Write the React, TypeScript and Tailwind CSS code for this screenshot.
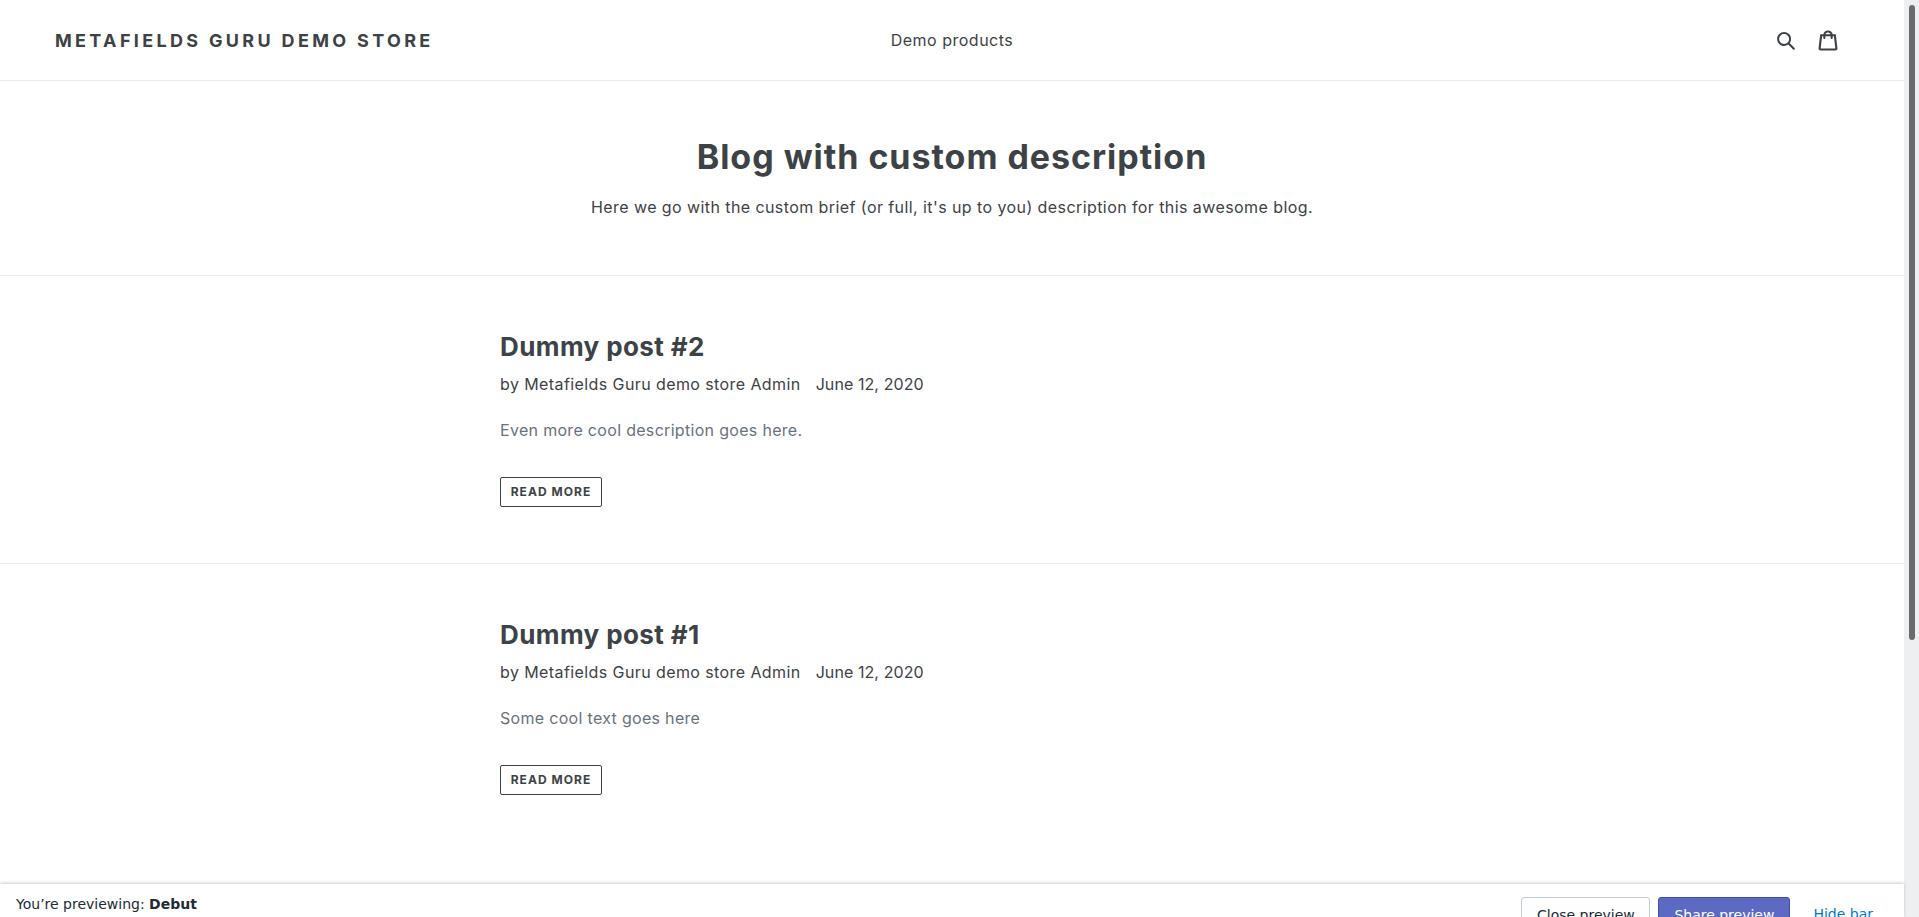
const posts = [
  { title: "Dummy post #2", excerpt: "Even more cool description goes here." },
  { title: "Dummy post #1", excerpt: "Some cool text goes here" },
];

function SearchIcon() {
  return (
    <svg viewBox="0 0 37 40" className="w-[20px] h-[20px] fill-[#3d4246]">
      <path d="M35.6 36l-9.8-9.8c4.1-5.4 3.6-13.2-1.3-18.1-5.4-5.4-14.2-5.4-19.7 0-5.4 5.4-5.4 14.2 0 19.7 2.6 2.6 6.1 4.1 9.8 4.1 3 0 5.9-1 8.3-2.8l9.8 9.8c.4.4.9.6 1.4.6s1-.2 1.4-.6c.9-.9.9-2.1.1-2.9zm-20.9-8.2c-2.6 0-5.1-1-7-2.9-3.9-3.9-3.9-10.1 0-14C9.6 9 12.2 8 14.7 8s5.1 1 7 2.9c3.9 3.9 3.9 10.1 0 14-1.9 1.9-4.4 2.9-7 2.9z" />
    </svg>
  );
}

function CartIcon() {
  return (
    <svg viewBox="0 0 37 40" className="w-[20px] h-[21px] fill-[#3d4246]">
      <path d="M36.5 34.8L33.3 8h-5.9C26.7 3.9 23 .8 18.5.8S10.3 3.9 9.6 8H3.7L.5 34.8c-.2 1.5.4 2.4.9 3 .5.5 1.4 1.2 3.1 1.2h28.1c1.3 0 2.4-.4 3.1-1.3.7-.7 1-1.8.8-2.9zm-18-30c2.2 0 4.1 1.4 4.7 3.2h-9.5c.7-1.9 2.6-3.2 4.8-3.2zM4.5 35l2.8-23h2.2v3c0 1.1.9 2 2 2s2-.9 2-2v-3h10v3c0 1.1.9 2 2 2s2-.9 2-2v-3h2.2l2.8 23h-28z" />
    </svg>
  );
}

function Post({ title, excerpt, last }: { title: string; excerpt: string; last?: boolean }) {
  return (
    <article className={last ? "h-[288px] pt-[55px] pl-[500px]" : "border-b border-[#e8e9eb] h-[288px] pt-[55px] pl-[500px]"}>
      <h2 className="text-[26px] leading-[31px] font-bold tracking-[0.4px]">{title}</h2>
      <div className="mt-[10px] leading-[24px] flex gap-[15px] tracking-[0.41px]">
        <span>by Metafields Guru demo store Admin</span>
        <span className="tracking-[0.08px]">June 12, 2020</span>
      </div>
      <p className="mt-[22px] leading-[24px] text-[#69727b] tracking-[0.31px]">{excerpt}</p>
      <button className="mt-[35px] flex items-center justify-center w-[102px] h-[30px] border border-[#3d4246] rounded-[2px] text-[12px] font-bold tracking-[1.05px] uppercase">
        Read more
      </button>
    </article>
  );
}

export default function App() {
  return (
    <div className="relative flex h-screen overflow-hidden bg-white text-[#3d4246] font-['Inter','Liberation_Sans',sans-serif]">
      <div className="flex-1 min-w-0">
        <header className="h-[81px] border-b border-[#e8e9eb] grid grid-cols-[1fr_auto_1fr] items-center px-[55px]">
          <a className="text-[18px] font-bold tracking-[3.33px] uppercase whitespace-nowrap">
            Metafields Guru demo store
          </a>
          <nav className="tracking-[0.5px]">Demo products</nav>
          <div className="flex items-center justify-end gap-[22px] pr-[11px]">
            <SearchIcon />
            <CartIcon />
          </div>
        </header>

        <section className="h-[195px] border-b border-[#e8e9eb] pt-[53px] text-center">
          <h1 className="text-[34px] leading-[46px] font-bold tracking-[0.97px]">Blog with custom description</h1>
          <p className="mt-[15px] leading-[24px] tracking-[0.42px]">
            Here we go with the custom brief (or full, it's up to you) description for this awesome blog.
          </p>
        </section>

        {posts.map((post, i) => (
          <Post key={post.title} {...post} last={i === posts.length - 1} />
        ))}
      </div>

      {/* fake browser scrollbar */}
      <div className="w-[15px] shrink-0 bg-[#eeeff1] pt-[5px]">
        <div className="ml-[5px] w-[6px] h-[635px] rounded-full bg-[#6b6b6b]" />
      </div>

      {/* preview bar */}
      <div className="absolute bottom-0 left-0 right-[15px] h-[33px] bg-white shadow-[0_-1px_3px_rgba(0,0,0,0.2)] font-['DejaVu_Sans',sans-serif] text-[14px] text-[#212b36]">
        <div className="flex items-start justify-between pl-[16px] pr-[31px]">
          <span className="mt-[10px] leading-[20px]">
            You’re previewing: <b>Debut</b>
          </span>
          <div className="flex items-start mt-[13px]">
            <button className="w-[129px] h-[36px] border border-[#c4cdd5] rounded-[3px] bg-gradient-to-b from-white to-[#f9fafb]">Close preview</button>
            <button className="ml-[8px] w-[132px] h-[36px] border border-[#3f4eae] rounded-[3px] bg-[#5c6ac4] text-white">Share preview</button>
            <span className="ml-[23px] mt-[7px] text-[#007ace]">Hide bar</span>
          </div>
        </div>
      </div>
    </div>
  );
}
